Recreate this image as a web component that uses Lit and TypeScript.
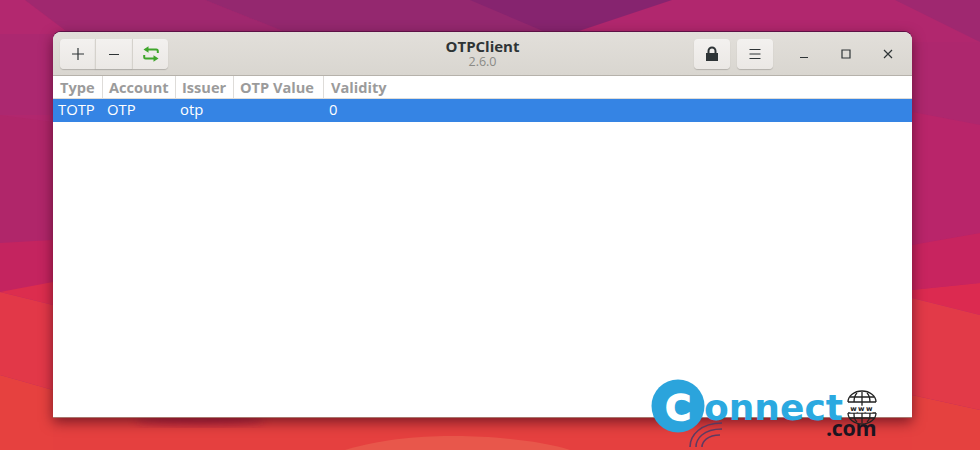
import { LitElement, html, css, svg } from "lit";
import { customElement } from "lit/decorators.js";

const columns = [
  { label: "Type", width: 50 },
  { label: "Account", width: 73 },
  { label: "Issuer", width: 58 },
  { label: "OTP Value", width: 90 },
  { label: "Validity", width: 0 },
];
const cells = [
  { text: "TOTP", width: 49 },
  { text: "OTP", width: 73 },
  { text: "otp", width: 149 },
  { text: "0", width: 0 },
];

const wallpaper = svg`<svg class="wall" viewBox="0 0 980 450" preserveAspectRatio="none" xmlns="http://www.w3.org/2000/svg">
  <defs><filter id="soft"><feGaussianBlur stdDeviation="4"/></filter></defs>
  <rect width="980" height="450" fill="#b1276e"/>
  <path d="M0 0H25L70 34H0Z" fill="#b3286f"/>
  <path d="M25 0H205L290 34H70Z" fill="#a0286f"/>
  <path d="M205 0H480L550 34H290Z" fill="#94286f"/>
  <path d="M470 0H672L570 34H550Z" fill="#86246f"/>
  <path d="M895 0H980V42Z" fill="#9f2870"/>
  <path d="M0 34H53V115H0Z" fill="#ac2870"/>
  <path d="M0 115L53 122V245L0 243Z" fill="#b0266a"/>
  <path d="M0 243L53 240V285L0 292Z" fill="#c4245f"/>
  <path d="M0 292L53 282V305L0 292Z" fill="#dc2d4e"/>
  <path d="M0 292L53 305V390L0 375Z" fill="#e23848"/>
  <path d="M0 375L53 390V450H0Z" fill="#e6413f"/>
  <path d="M912 42H980V125L912 112Z" fill="#ae276e"/>
  <path d="M912 112L980 125V233L912 245Z" fill="#b9256a"/>
  <path d="M912 245L980 233V283L912 290Z" fill="#c8245f"/>
  <path d="M912 290L980 283V315L912 298Z" fill="#dc2a50"/>
  <path d="M912 298L980 315V410L912 395Z" fill="#e23a48"/>
  <path d="M912 395L980 410V450H912Z" fill="#e5413f"/>
  <path d="M53 410H912V450H53Z" fill="#e5403f"/>
  <path d="M345 450C385 438 425 436 456 436S540 440 570 450Z" fill="#e8574b"/>
  <ellipse cx="200" cy="420" rx="65" ry="6" fill="#a81c40" opacity=".6" filter="url(#soft)"/>
</svg>`;

const logo = svg`<svg class="logo" width="240" height="72" viewBox="0 0 240 72" xmlns="http://www.w3.org/2000/svg">
  <circle cx="27" cy="27" r="26.5" fill="#2ba4dc"/>
  <text x="27" y="41" text-anchor="middle" class="logo-c">C</text>
  <text x="53" y="41" class="logo-word">onnect</text>
  <text x="175" y="57" class="logo-com">.com</text>
  <g fill="none" stroke="#4a3a66" stroke-width="1.6" opacity=".85">
    <path d="M39 68C39 56 50 44 71 44"/>
    <path d="M45 68C45 60 52 50 71 50"/>
    <path d="M51 68C51 63 56 56 69 56"/>
  </g>
  <g fill="none" stroke="#222" stroke-width="1.3">
    <path d="M197 23A14 11 0 0 1 225 23"/>
    <path d="M197 34A14 11 0 0 0 225 34"/>
    <path d="M211 13V44M206 14C203 17 203 20 203 23M216 14C219 17 219 20 219 23M203 34C203 38 203 40 206 43M219 34C219 38 219 40 216 43M199 18H223M197 23H225M197 34H225M199 39H223"/>
  </g>
  <text x="211" y="32" text-anchor="middle" class="logo-www">www</text>
</svg>`;

@customElement("app-root")
export class AppRoot extends LitElement {
  static styles = css`
    :host {
      display: block;
      position: relative;
      width: 980px;
      height: 450px;
      overflow: hidden;
      font-family: "Open Sans", "Liberation Sans", sans-serif;
    }
    .wall { position: absolute; inset: 0; width: 980px; height: 450px; }
    .stage { position: relative; padding: 32px 68px 0 53px; }
    .window {
      width: 859px;
      height: 386px;
      display: flex;
      flex-direction: column;
      background: #fff;
      border-radius: 8px 8px 0 0;
      overflow: hidden;
      box-sizing: border-box;
      border-bottom: 1px solid #a9776e;
      box-shadow: 0 -1px 0 #5d1145, 0 4px 13px rgba(50, 0, 20, .6);
    }
    .header {
      flex: 0 0 43px;
      display: grid;
      grid-template-columns: 1fr auto 1fr;
      align-items: center;
      padding: 0 3px;
      background: linear-gradient(#e2dfda, #d9d6d0);
      border-bottom: 1px solid #b6b2ab;
    }
    .btn {
      width: 36px;
      height: 30px;
      display: flex;
      align-items: center;
      justify-content: center;
      background: linear-gradient(#f3f1ef, #ebe8e5);
      border-radius: 4px;
      box-shadow: 0 1px 1px rgba(0, 0, 0, .18);
      color: #2e3436;
    }
    .group { display: flex; margin-left: 4px; }
    .group .btn { border-radius: 0; border-left: 1px solid #d5d2cc; box-sizing: border-box; }
    .group .btn:first-child { border-radius: 4px 0 0 4px; border-left: 0; width: 35px; }
    .group .btn:nth-child(2) { width: 37px; }
    .group .btn:last-child { border-radius: 0 4px 4px 0; }
    .title {
      display: flex;
      flex-direction: column;
      align-items: center;
      line-height: 15px;
    }
    .title b { font-size: 15px; font-weight: 700; color: #2e3436; }
    .title span { font-size: 12.5px; color: #8a8a86; }
    .end { display: flex; justify-content: flex-end; align-items: center; }
    .right { display: flex; gap: 7px; }
    .wm { display: flex; margin-left: 10px; }
    .wm svg { display: block; }
    .wmb { width: 42px; display: flex; justify-content: center; }
    .cols { display: flex; height: 23px; flex: 0 0 23px; background: #fff; }
    .col {
      box-sizing: border-box;
      padding: 0 0 0 6px;
      display: flex;
      align-items: center;
      font-size: 14.6px;
      font-weight: 700;
      color: #9b9b9b;
      border-right: 1px solid #dedcd9;
      border-bottom: 1px solid #dedcd9;
      white-space: nowrap;
    }
    .col:first-child { padding-left: 7px; }
    .col:last-child { flex: 1; border-right: 0; padding-left: 7px; }
    .row {
      display: flex;
      height: 23px;
      flex: 0 0 23px;
      box-sizing: border-box;
      padding-bottom: 3px;
      align-items: center;
      background: #3584e4;
      color: #fff;
      font-size: 14.8px;
    }
    .cell { box-sizing: border-box; padding-left: 5px; white-space: nowrap; }
    .logo { position: absolute; left: 651px; top: 379px; overflow: visible; }
    .logo-c { font: 700 35px "DejaVu Sans", sans-serif; fill: #fff; stroke: #fff; stroke-width: 1.5px; }
    .logo-word { font: 700 36px "DejaVu Sans", sans-serif; fill: #2ba9e0; }
    .logo-com { font: 700 21.5px "Open Sans", sans-serif; fill: #1c1420; letter-spacing: -.3px; }
    .logo-www { font: 700 7px "DejaVu Sans", sans-serif; fill: #222; letter-spacing: 1.4px; paint-order: stroke; stroke: #fff; stroke-width: 3px; }
  `;

  render() {
    return html`
      ${wallpaper}
      <div class="stage">
        <div class="window">
          <div class="header">
            <div class="group">
              <div class="btn"><svg width="14" height="14" viewBox="0 0 14 14"><path d="M7 1V13M1 7H13" stroke="#2e3436" stroke-width="1.2" fill="none"/></svg></div>
              <div class="btn"><svg width="12" height="14" viewBox="0 0 12 14"><path d="M1 7.5H11" stroke="#2e3436" stroke-width="1.2" fill="none"/></svg></div>
              <div class="btn"><svg width="18" height="16" viewBox="0 0 18 16" fill="none" stroke="#3fa62b" stroke-width="2">
                <path d="M15.8 7V5Q15.8 3.5 14.3 3.5H5"/><path d="M2.2 9V11Q2.2 12.5 3.7 12.5H13"/>
                <path d="M6.5 .3L1.5 3.5L6.5 6.7Z" fill="#3fa62b" stroke="none"/><path d="M11.5 9.3L16.5 12.5L11.5 15.7Z" fill="#3fa62b" stroke="none"/></svg></div>
            </div>
            <div class="title"><b>OTPClient</b><span>2.6.0</span></div>
            <div class="end">
              <div class="right">
                <div class="btn"><svg width="14" height="16" viewBox="0 0 14 16"><path d="M1 7H13V15H1Z" fill="#2e3436"/><path d="M3.5 8V5A3.5 3.5 0 0 1 10.5 5V8" fill="none" stroke="#2e3436" stroke-width="2"/></svg></div>
                <div class="btn"><svg width="12" height="12" viewBox="0 0 12 12"><path d="M.5 1.5H11.5M.5 6H11.5M.5 10.5H11.5" stroke="#2e3436" stroke-width="1.2" fill="none"/></svg></div>
              </div>
              <div class="wm">
                <div class="wmb"><svg width="10" height="10" viewBox="0 0 10 10"><path d="M1 8.5H9" stroke="#2e3436" stroke-width="1.1"/></svg></div>
                <div class="wmb"><svg width="10" height="10" viewBox="0 0 10 10"><path d="M1 1H9V9H1Z" stroke="#2e3436" stroke-width="1.2" fill="none"/></svg></div>
                <div class="wmb"><svg width="10" height="10" viewBox="0 0 10 10"><path d="M1 1L9 9M9 1L1 9" stroke="#2e3436" stroke-width="1.2" fill="none"/></svg></div>
              </div>
            </div>
          </div>
          <div class="cols">
            ${columns.map(
              (c) => html`<div class="col" style=${c.width ? `width:${c.width}px` : ""}>${c.label}</div>`
            )}
          </div>
          <div class="row">
            ${cells.map(
              (c) => html`<div class="cell" style=${c.width ? `width:${c.width}px` : ""}>${c.text}</div>`
            )}
          </div>
        </div>
      </div>
      ${logo}
    `;
  }
}
